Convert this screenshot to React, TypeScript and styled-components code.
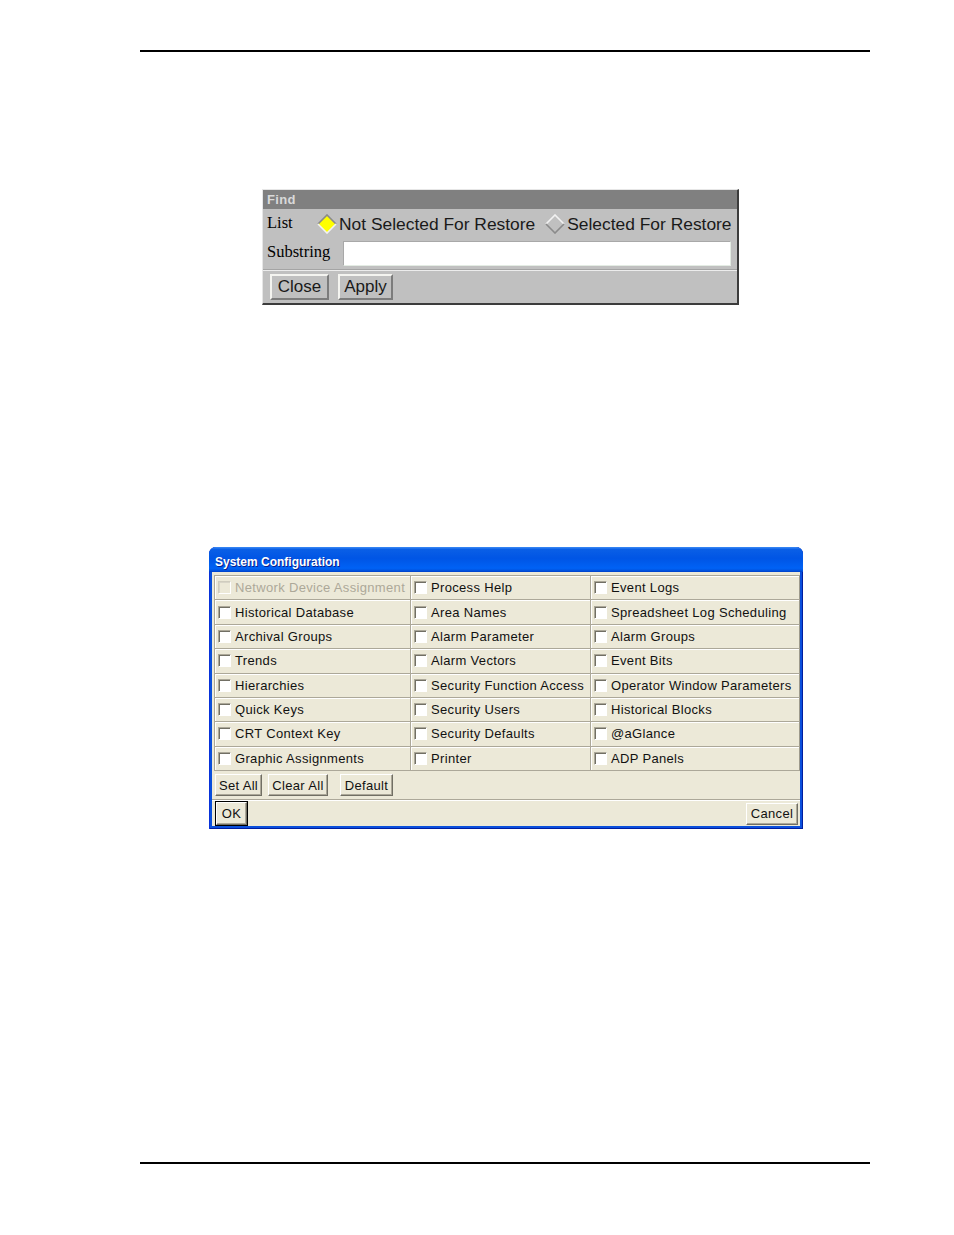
import React from "react";
import styled, { createGlobalStyle } from "styled-components";

const Global = createGlobalStyle`
  html, body { margin: 0; padding: 0; background: #fff; }
  body { font-family: "Liberation Sans", Arial, sans-serif; }
`;

const Page = styled.div`
  width: 954px;
  height: 1235px;
  display: flex;
  flex-direction: column;
  overflow: hidden;
`;

const Rule = styled.div<{ $top: number }>`
  margin-top: ${(p) => p.$top}px;
  margin-left: 140px;
  width: 730px;
  height: 2px;
  background: #000;
  flex: none;
`;

/* ---------- Find dialog (Motif style) ---------- */

const FindWindow = styled.div`
  margin-top: 137px;
  margin-left: 262px;
  width: 477px;
  height: 116px;
  box-sizing: border-box;
  background: #c0c0c0;
  border-top: 1px solid #e6e6e6;
  border-left: 1px solid #e6e6e6;
  border-right: 2px solid #3c3c3c;
  border-bottom: 2px solid #3c3c3c;
  display: flex;
  flex-direction: column;
  flex: none;
  overflow: hidden;
`;

const FindTitle = styled.div`
  height: 19px;
  background: #808080;
  color: #d9d9d9;
  font: bold 13px "Liberation Sans", Arial, sans-serif;
  letter-spacing: 0.3px;
  line-height: 20px;
  padding-left: 4px;
  flex: none;
`;

const FindRow = styled.div<{ $h: number }>`
  height: ${(p) => p.$h}px;
  display: flex;
  align-items: center;
  padding-left: 4px;
  flex: none;
  white-space: nowrap;
`;

const SerifLabel = styled.span<{ $w: number }>`
  font: 16.5px "Liberation Serif", "Times New Roman", serif;
  color: #000;
  width: ${(p) => p.$w}px;
  flex: none;
  margin-top: -3px;
`;

const RadioOption = styled.span`
  display: inline-flex;
  align-items: center;
  gap: 2px;
  margin-right: 10px;
  flex: none;
  white-space: nowrap;
  font: 17.4px "Liberation Sans", Arial, sans-serif;
  color: #1a1a1a;
`;

const TextField = styled.div`
  width: 388px;
  height: 25px;
  box-sizing: border-box;
  flex: none;
  background: #fff;
  border-top: 1px solid #a8a8a8;
  border-left: 1px solid #a8a8a8;
  border-right: 1px solid #e4ece4;
  border-bottom: 1px solid #e4ece4;
`;

const FindSep = styled.div`
  height: 0;
  border-top: 1px solid #a4a4a4;
  border-bottom: 1px solid #ececec;
  margin-top: 2px;
  flex: none;
`;

const FindButtons = styled.div`
  display: flex;
  gap: 9px;
  padding: 3px 0 0 7px;
`;

const MotifButton = styled.button<{ $w: number }>`
  width: ${(p) => p.$w}px;
  height: 26px;
  padding: 0;
  background: #c0c0c0;
  font: 17px "Liberation Sans", Arial, sans-serif;
  color: #1a1a1a;
  border-top: 2px solid #f4f4f0;
  border-left: 2px solid #f4f4f0;
  border-right: 2px solid #7c7c7c;
  border-bottom: 2px solid #7c7c7c;
  box-sizing: border-box;
  line-height: 20px;
`;

const Diamond: React.FC<{ on?: boolean }> = ({ on }) => (
  <svg width="20" height="20" viewBox="0 0 20 20" style={{ flex: "none" }}>
    <polygon points="10,1 19,10 10,19 1,10" fill={on ? "#ffff00" : "#c0c0c0"} />
    <polyline
      points="1,10 10,1 19,10"
      fill="none"
      stroke={on ? "#8a8a8a" : "#f2f2f2"}
      strokeWidth="1.6"
    />
    <polyline
      points="1,10 10,19 19,10"
      fill="none"
      stroke={on ? "#f2f2f2" : "#8a8a8a"}
      strokeWidth="1.6"
    />
  </svg>
);

/* ---------- System Configuration (XP style) ---------- */

const XPWindow = styled.div`
  margin-top: 242px;
  margin-left: 209px;
  width: 594px;
  height: 282px;
  box-sizing: border-box;
  background: #0a4fdc;
  border-radius: 7px 7px 0 0;
  padding: 0 3px 3px 3px;
  display: flex;
  flex-direction: column;
  flex: none;
  box-shadow: inset 1px 0 0 #0831d9, inset -1px 0 0 #001ea0, inset 0 -1px 0 #001ea0;
`;

const XPTitle = styled.div`
  height: 25px;
  margin: 0 -3px;
  border-radius: 7px 7px 0 0;
  background: linear-gradient(
    to bottom,
    #3d8bf5 0%,
    #0a5fe6 10%,
    #0055e5 45%,
    #0062f5 85%,
    #0053e0 94%,
    #0040c8 100%
  );
  color: #fff;
  font: bold 12px "Liberation Sans", Arial, sans-serif;
  line-height: 30px;
  padding-left: 6px;
  text-shadow: 1px 1px 0 #0a1e8c;
  flex: none;
`;

const Client = styled.div`
  flex: 1;
  background: #ece9d8;
  padding: 3px 1px 0 2px;
  display: flex;
  flex-direction: column;
`;

const OptionGrid = styled.div`
  display: grid;
  grid-template-columns: 196px 180px 209px;
  grid-template-rows: repeat(8, 1fr);
  height: 195px;
  box-shadow: 1px 1px 0 #fff;
`;

const Cell = styled.div<{ $disabled?: boolean }>`
  display: flex;
  align-items: center;
  gap: 4px;
  padding-left: 3px;
  border: 1px solid #aca899;
  border-right-color: #9d9a8c;
  box-shadow: inset 1px 1px 0 #fff;
  margin: 0 -1px -1px 0;
  font: 13px "Liberation Sans", Arial, sans-serif;
  letter-spacing: 0.33px;
  color: ${(p) => (p.$disabled ? "#aca899" : "#111")};
  white-space: nowrap;
  overflow: hidden;
`;

const Check = styled.span<{ $disabled?: boolean }>`
  width: 13px;
  height: 13px;
  box-sizing: border-box;
  flex: none;
  background: ${(p) => (p.$disabled ? "#ece9d8" : "#fff")};
  border-top: 1px solid ${(p) => (p.$disabled ? "#cfccbe" : "#aca899")};
  border-left: 1px solid ${(p) => (p.$disabled ? "#cfccbe" : "#aca899")};
  border-right: 1px solid #fff;
  border-bottom: 1px solid #fff;
  box-shadow: inset 1px 1px 0 ${(p) => (p.$disabled ? "#d8d5c8" : "#716f64")};
`;

const ButtonRow = styled.div<{ $justify?: string }>`
  display: flex;
  align-items: center;
  justify-content: ${(p) => p.$justify || "flex-start"};
`;

const ActionRow = styled(ButtonRow)`
  height: 29px;
  padding: 1px 0 0 1px;
  box-sizing: border-box;
  gap: 6px;
`;

const Separator = styled.div`
  height: 0;
  border-top: 1px solid #aca899;
  border-bottom: 1px solid #fff;
  margin: 0 -1px 0 -2px;
`;

const FooterRow = styled(ButtonRow)`
  flex: 1;
  padding: 0 1px 0 2px;
`;

const XPButton = styled.button<{ $w: number; $h?: number; $default?: boolean; $ml?: number }>`
  width: ${(p) => p.$w}px;
  height: ${(p) => p.$h || 22}px;
  margin-left: ${(p) => p.$ml || 0}px;
  padding: 0;
  box-sizing: border-box;
  background: #ece9d8;
  font: 13px "Liberation Sans", Arial, sans-serif;
  letter-spacing: 0.33px;
  color: #111;
  border-top: 1px solid #fff;
  border-left: 1px solid #fff;
  border-right: 1px solid #716f64;
  border-bottom: 1px solid #716f64;
  box-shadow: inset -1px -1px 0 #aca899
    ${(p) => (p.$default ? ", 0 0 0 1px #000" : "")};
`;

const left = [
  "Network Device Assignment",
  "Historical Database",
  "Archival Groups",
  "Trends",
  "Hierarchies",
  "Quick Keys",
  "CRT Context Key",
  "Graphic Assignments",
];
const middle = [
  "Process Help",
  "Area Names",
  "Alarm Parameter",
  "Alarm Vectors",
  "Security Function Access",
  "Security Users",
  "Security Defaults",
  "Printer",
];
const right = [
  "Event Logs",
  "Spreadsheet Log Scheduling",
  "Alarm Groups",
  "Event Bits",
  "Operator Window Parameters",
  "Historical Blocks",
  "@aGlance",
  "ADP Panels",
];

export default function App() {
  const cells: { label: string; disabled: boolean }[] = [];
  for (let i = 0; i < 8; i++) {
    cells.push({ label: left[i], disabled: i === 0 });
    cells.push({ label: middle[i], disabled: false });
    cells.push({ label: right[i], disabled: false });
  }
  return (
    <Page>
      <Global />
      <Rule $top={50} />

      <FindWindow>
        <FindTitle>Find</FindTitle>
        <FindRow $h={30}>
          <SerifLabel $w={50}>List</SerifLabel>
          <RadioOption>
            <Diamond on />
            Not Selected For Restore
          </RadioOption>
          <RadioOption>
            <Diamond />
            Selected For Restore
          </RadioOption>
        </FindRow>
        <FindRow $h={28}>
          <SerifLabel $w={76}>Substring</SerifLabel>
          <TextField />
        </FindRow>
        <FindSep />
        <FindButtons>
          <MotifButton $w={59}>Close</MotifButton>
          <MotifButton $w={55}>Apply</MotifButton>
        </FindButtons>
      </FindWindow>

      <XPWindow>
        <XPTitle>System Configuration</XPTitle>
        <Client>
          <OptionGrid>
            {cells.map((c) => (
              <Cell key={c.label} $disabled={c.disabled}>
                <Check $disabled={c.disabled} />
                {c.label}
              </Cell>
            ))}
          </OptionGrid>
          <ActionRow>
            <XPButton $w={47}>Set All</XPButton>
            <XPButton $w={60}>Clear All</XPButton>
            <XPButton $w={53} $ml={6}>Default</XPButton>
          </ActionRow>
          <Separator />
          <FooterRow $justify="space-between">
            <XPButton $w={31} $h={23} $default>OK</XPButton>
            <XPButton $w={52}>Cancel</XPButton>
          </FooterRow>
        </Client>
      </XPWindow>

      <Rule $top={333} />
    </Page>
  );
}
